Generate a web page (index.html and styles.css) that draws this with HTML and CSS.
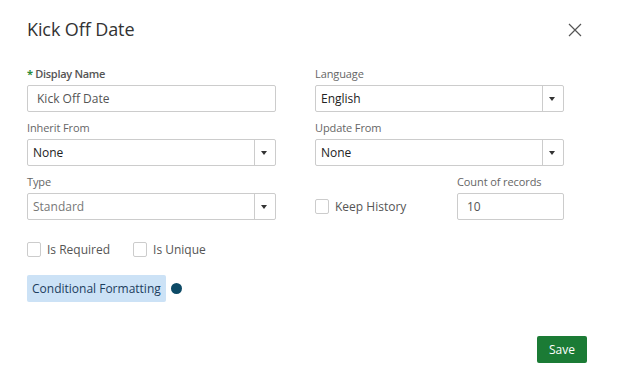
FILE: index.html
```html
<!DOCTYPE html>
<html lang="en">
<head>
	<meta charset="UTF-8">
	<title>Kick Off Date</title>
	<link rel="stylesheet" href="styles.css">
</head>
<body>
	<div class="dialog">
		<div class="head">
			<h1>Kick Off Date</h1>
			<svg class="close" width="14" height="14" viewBox="0 0 14 14"><path d="M1 1L13 13M13 1L1 13" stroke="#555" stroke-width="1.2" fill="none"/></svg>
		</div>
		<div class="grid">
			<div class="field">
				<label class="lbl req"><span class="star">*</span> Display Name</label>
				<div class="input">Kick Off Date</div>
			</div>
			<div class="field">
				<label class="lbl">Language</label>
				<div class="select"><span class="val">English</span><span class="arrow"></span></div>
			</div>
			<div class="field">
				<label class="lbl">Inherit From</label>
				<div class="select"><span class="val">None</span><span class="arrow"></span></div>
			</div>
			<div class="field">
				<label class="lbl">Update From</label>
				<div class="select"><span class="val">None</span><span class="arrow"></span></div>
			</div>
			<div class="field">
				<label class="lbl">Type</label>
				<div class="select dis"><span class="val">Standard</span><span class="arrow"></span></div>
			</div>
			<div class="history">
				<div class="check"><span class="box"></span>Keep History</div>
				<div class="field count">
					<label class="lbl">Count of records</label>
					<div class="input">10</div>
				</div>
			</div>
		</div>
		<div class="checks">
			<div class="check"><span class="box"></span>Is Required</div>
			<div class="check"><span class="box"></span>Is Unique</div>
		</div>
		<div class="cond">
			<span class="cond-btn">Conditional Formatting</span>
			<span class="dot"></span>
		</div>
		<div class="foot">
			<span class="save">Save</span>
		</div>
	</div>
</body>
</html>
```

FILE: styles.css
```css
*{
	margin:0;
	padding:0;
	box-sizing:border-box;
}
body{
	background:#fff;
	font-family:"Open Sans","Noto Sans",sans-serif;
	color:#333;
}
.dialog{
	width:617px;
	height:381px;
	padding:15px 34px 0 27px;
}
.head{
	display:flex;
	justify-content:space-between;
	align-items:center;
	height:27px;
	margin-bottom:24px;
}
.head h1{
	font-size:18px;
	font-weight:normal;
	color:#333;
	letter-spacing:-0.1px;
}
.close{
	margin-top:2px;
	margin-right:1px;
}
.grid{
	display:grid;
	grid-template-columns:249px 249px;
	column-gap:39px;
	row-gap:8px;
}
.field{
	display:flex;
	flex-direction:column;
}
.lbl{
	font-size:11px;
	color:#666;
	height:15px;
	line-height:15px;
	margin-bottom:4px;
	letter-spacing:-0.1px;
}
.lbl.req{
	color:#555;
	font-weight:600;
	letter-spacing:-0.3px;
}
.star{
	color:#2e8b3a;
	font-weight:bold;
}
.input,.select{
	height:27px;
	border:1px solid #ccc;
	border-radius:2px;
	font-size:12px;
	line-height:25px;
	padding-left:9px;
	color:#555;
}
.select{
	display:flex;
	padding-left:5px;
	color:#222;
}
.select .val{
	flex:1;
}
.select.dis .val{
	color:#777;
}
.arrow{
	width:21px;
	border-left:1px solid #ccc;
	position:relative;
}
.arrow:after{
	content:'';
	position:absolute;
	left:6px;
	top:11px;
	border-left:3px solid transparent;
	border-right:3px solid transparent;
	border-top:4px solid #333;
}
.history{
	display:flex;
	align-items:flex-end;
	justify-content:space-between;
}
.history .check{
	height:27px;
}
.count{
	width:107px;
}
.check{
	display:flex;
	align-items:center;
	font-size:12px;
	color:#555;
}
.box{
	width:14px;
	height:15px;
	border:1px solid #ccc;
	border-radius:2px;
	margin-right:6px;
}
.checks{
	display:flex;
	gap:23px;
	margin-top:21px;
	height:17px;
}
.cond{
	display:flex;
	align-items:center;
	margin-top:17px;
}
.cond-btn{
	background:#cce2f6;
	color:#1c3d5e;
	font-size:12px;
	height:27px;
	line-height:27px;
	padding:0 5px;
	border-radius:2px;
}
.dot{
	width:11px;
	height:11px;
	border-radius:50%;
	background:#0d4a66;
	margin-left:5px;
}
.foot{
	display:flex;
	justify-content:flex-end;
	margin-top:34px;
}
.save{
	background:#1b7b35;
	color:#fff;
	font-size:12px;
	height:27px;
	line-height:27px;
	padding:0 12px;
	border-radius:2px;
	margin-right:-4px;
}
```
